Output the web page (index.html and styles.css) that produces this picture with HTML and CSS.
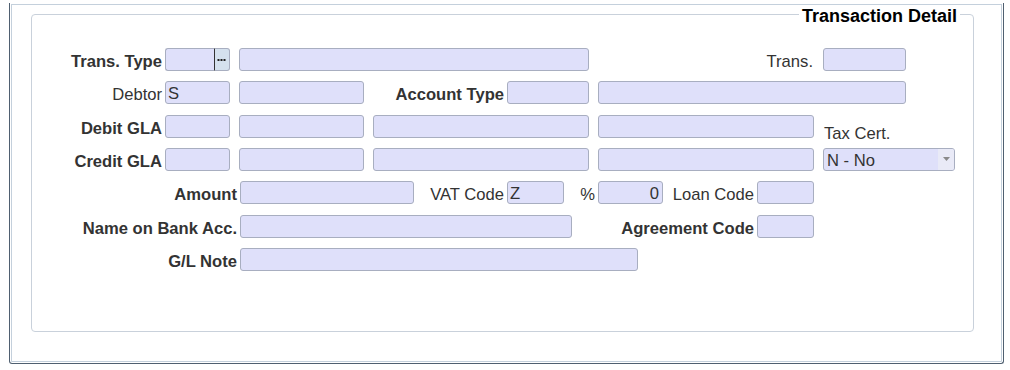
FILE: index.html
```html
<!DOCTYPE html>
<html lang="en">
<head>
  <meta charset="UTF-8" />
  <meta name="viewport" content="width=device-width, initial-scale=1.0" />
  <title>Transaction Detail</title>
  <link rel="stylesheet" href="styles.css">
</head>
<body>
  <div class="panel">

    <!-- TRANSACTION DETAIL -->
    <fieldset class="detail">
      <legend>Transaction Detail</legend>

      <div class="rows">
        <div class="row">
          <label class="lbl bold w130">Trans. Type</label>
          <input type="text" class="w50 lookup">
          <button type="button" class="dots">
            <svg width="13" height="21" viewBox="0 0 13 21"><rect x="2.5" y="10" width="2" height="2" fill="#222"/><rect x="5.5" y="10" width="2" height="2" fill="#222"/><rect x="8.5" y="10" width="2" height="2" fill="#222"/></svg>
          </button>
          <input type="text" class="type-desc gap">
          <label class="lbl w231 pad-r">Trans.</label>
          <input type="text" class="w83">
        </div>

        <div class="row">
          <label class="lbl w130">Debtor</label>
          <input type="text" class="w65" value="S">
          <input type="text" class="w125 gap">
          <label class="lbl bold w140">Account Type</label>
          <input type="text" class="w82">
          <input type="text" class="w308 gap">
        </div>

        <div class="row">
          <label class="lbl bold w130">Debit GLA</label>
          <input type="text" class="w65">
          <input type="text" class="w125 gap">
          <input type="text" class="w216 gap">
          <input type="text" class="w216 gap">
          <label class="above">Tax Cert.</label>
        </div>

        <div class="row">
          <label class="lbl bold w130">Credit GLA</label>
          <input type="text" class="w65">
          <input type="text" class="w125 gap">
          <input type="text" class="w216 gap">
          <input type="text" class="w216 gap">
          <div class="select gap">
            <span class="select-text">N - No</span>
            <span class="select-arrow">
              <svg width="7" height="4" viewBox="0 0 7 4"><path d="M0 0h7L3.5 4z" fill="#8a8a8a"/></svg>
            </span>
          </div>
        </div>

        <div class="row">
          <label class="lbl bold w205">Amount</label>
          <input type="text" class="w174">
          <label class="lbl w90">VAT Code</label>
          <input type="text" class="w57" value="Z">
          <label class="lbl w31">%</label>
          <input type="text" class="w65 num" value="0">
          <label class="lbl w91">Loan Code</label>
          <input type="text" class="w57">
        </div>

        <div class="row">
          <label class="lbl bold w205">Name on Bank Acc.</label>
          <input type="text" class="w332">
          <label class="lbl bold w182">Agreement Code</label>
          <input type="text" class="w57">
        </div>

        <div class="row">
          <label class="lbl bold w205">G/L Note</label>
          <input type="text" class="w398">
        </div>
      </div>
    </fieldset>

  </div>
</body>
</html>
```

FILE: styles.css
```css
body {
  font-family: "Liberation Sans", Arial, sans-serif;
  background-color: #fff;
  margin: 0;
  padding: 0;
}

.panel {
  margin-left: 9px;
  width: 995px;
  box-sizing: border-box;
  border: 1px solid #4f5f70;
  border-top: none;
  border-radius: 0 0 3px 3px;
  box-shadow: inset 0 0 0 1px #fff, inset 0 0 0 2px #c4d0dc;
  padding: 0 0 0 21px;
}

.detail {
  width: 943px;
  box-sizing: border-box;
  margin: 3px 0 31px 0;
  padding: 0 0 55px 0;
  border: 1px solid #c9d1db;
  border-radius: 4px;
}

.detail legend {
  margin-left: auto;
  margin-right: 13px;
  padding: 4px 3px 0;
  font-size: 18px;
  line-height: 19px;
  font-weight: bold;
  color: #000;
}

.rows {
  padding-top: 16.8px;
}

.row {
  display: flex;
  align-items: center;
  height: 33.333px;
}

.lbl {
  flex: none;
  box-sizing: border-box;
  margin-right: 3px;
  padding-top: 5px;
  height: 23px;
  line-height: 18px;
  font-size: 16.6px;
  color: #333;
  text-align: right;
  white-space: nowrap;
}

.bold {
  font-weight: bold;
}

.pad-r {
  padding-right: 7px;
}

.above {
  align-self: flex-end;
  margin-left: 10px;
  line-height: 18px;
  font-size: 16.6px;
  color: #333;
  white-space: nowrap;
}

input[type="text"] {
  flex: none;
  box-sizing: border-box;
  height: 23px;
  margin: 0;
  padding: 3px 2px 0;
  border: 1px solid #a8aec0;
  border-radius: 3px;
  background-color: #dfe0fa;
  font-family: "Liberation Sans", Arial, sans-serif;
  font-size: 16.6px;
  color: #333;
  outline: none;
}

input.num {
  text-align: right;
  padding-right: 3px;
}

input.lookup {
  border-right-color: #333;
  border-radius: 3px 0 0 3px;
}

input.type-desc {
  width: 350px;
}

.row .gap {
  margin-left: 9px;
}

.dots {
  flex: none;
  box-sizing: border-box;
  width: 15px;
  height: 23px;
  margin: 0;
  padding: 0;
  border: 1px solid #a8aec0;
  border-left: none;
  border-radius: 0 3px 3px 0;
  background-color: #d5e1ee;
  display: flex;
  align-items: flex-start;
}

.select {
  flex: none;
  box-sizing: border-box;
  width: 132px;
  height: 23px;
  display: flex;
  border: 1px solid #a8aec0;
  border-radius: 3px;
  background-color: #dfe0fa;
  overflow: hidden;
}

.select-text {
  flex: 1;
  padding: 3px 0 0 3px;
  font-size: 16.6px;
  line-height: 18px;
  color: #333;
}

.select-arrow {
  width: 16px;
  display: flex;
  align-items: center;
  justify-content: center;
  background-color: #e9eaf7;
}

.w31 { width: 31px; }
.w50 { width: 50px; }
.w57 { width: 57px; }
.w65 { width: 65px; }
.w82 { width: 82px; }
.w83 { width: 83px; }
.w90 { width: 90px; }
.w91 { width: 91px; }
.w125 { width: 125px; }
.w130 { width: 130px; }
.w140 { width: 140px; }
.w174 { width: 174px; }
.w182 { width: 182px; }
.w205 { width: 205px; }
.w216 { width: 216px; }
.w231 { width: 231px; }
.w308 { width: 308px; }
.w332 { width: 332px; }
.w398 { width: 398px; }
```
